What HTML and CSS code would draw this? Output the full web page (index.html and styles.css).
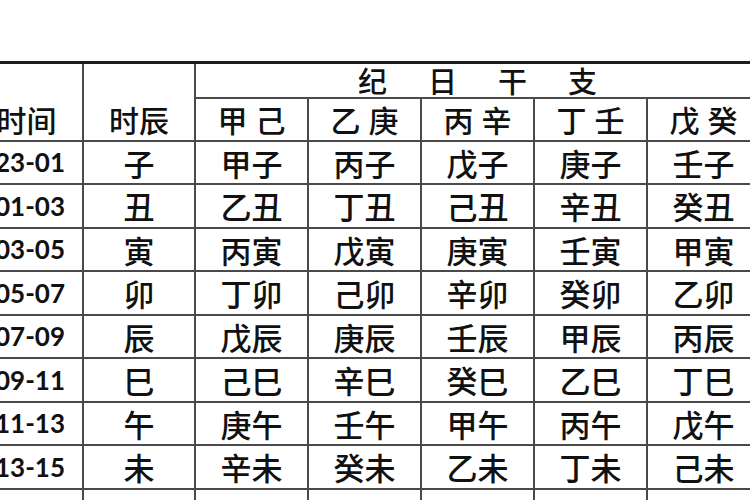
FILE: index.html
```html
<!DOCTYPE html>
<html lang="zh-CN">
<head>
<meta charset="utf-8">
<title>纪日干支</title>
<link rel="stylesheet" href="styles.css">
</head>
<body>
<div class="sheet">
  <table class="ganzhi">
    <colgroup>
      <col class="c-time">
      <col class="c-shichen">
      <col class="c-day">
      <col class="c-day">
      <col class="c-day">
      <col class="c-day">
      <col class="c-day">
    </colgroup>
    <thead>
      <tr class="h1">
        <th rowspan="2" class="th-side">时间</th>
        <th rowspan="2" class="th-side">时辰</th>
        <th colspan="5" class="th-span">纪日干支</th>
      </tr>
      <tr class="h2">
        <th class="th-sub">甲己</th>
        <th class="th-sub">乙庚</th>
        <th class="th-sub">丙辛</th>
        <th class="th-sub">丁壬</th>
        <th class="th-sub">戊癸</th>
      </tr>
    </thead>
    <tbody>
      <tr><td class="num">23-01</td><td>子</td><td>甲子</td><td>丙子</td><td>戊子</td><td>庚子</td><td>壬子</td></tr>
      <tr><td class="num">01-03</td><td>丑</td><td>乙丑</td><td>丁丑</td><td>己丑</td><td>辛丑</td><td>癸丑</td></tr>
      <tr><td class="num">03-05</td><td>寅</td><td>丙寅</td><td>戊寅</td><td>庚寅</td><td>壬寅</td><td>甲寅</td></tr>
      <tr><td class="num">05-07</td><td>卯</td><td>丁卯</td><td>己卯</td><td>辛卯</td><td>癸卯</td><td>乙卯</td></tr>
      <tr><td class="num">07-09</td><td>辰</td><td>戊辰</td><td>庚辰</td><td>壬辰</td><td>甲辰</td><td>丙辰</td></tr>
      <tr><td class="num">09-11</td><td>巳</td><td>己巳</td><td>辛巳</td><td>癸巳</td><td>乙巳</td><td>丁巳</td></tr>
      <tr><td class="num">11-13</td><td>午</td><td>庚午</td><td>壬午</td><td>甲午</td><td>丙午</td><td>戊午</td></tr>
      <tr><td class="num">13-15</td><td>未</td><td>辛未</td><td>癸未</td><td>乙未</td><td>丁未</td><td>己未</td></tr>
      <tr class="cut"><td class="num">15-17</td><td>申</td><td>壬申</td><td>甲申</td><td>丙申</td><td>戊申</td><td>庚申</td></tr>
    </tbody>
  </table>
</div>
</body>
</html>
```
FILE: styles.css
```css
html, body {
  margin: 0;
  padding: 0;
  background: #ffffff;
}

.sheet {
  width: 750px;
  height: 500px;
  overflow: hidden;
  padding-top: 61px;
  box-sizing: border-box;
  background: #ffffff;
}

.ganzhi {
  margin-left: -31px;
  border-collapse: collapse;
  table-layout: fixed;
  width: 790px;
  color: #111111;
  font-family: "Noto Sans CJK SC", "Noto Sans", sans-serif;
}

.c-time { width: 113px; }
.c-shichen { width: 112px; }
.c-day { width: 113px; }

.ganzhi th,
.ganzhi td {
  border: 2px solid #4a4a4a;
  padding: 0;
  text-align: center;
  vertical-align: middle;
  font-weight: 500;
  white-space: nowrap;
  overflow: hidden;
  box-sizing: border-box;
}

.ganzhi .h1 th {
  border-top: 3px solid #1c1c1c;
}

.h1 { height: 35px; }
.h2 { height: 43px; }
.ganzhi tbody tr { height: 43.5px; }

.ganzhi .th-side {
  font-size: 30px;
  line-height: 1;
  vertical-align: bottom;
  padding-bottom: 6px;
}

.ganzhi .th-span {
  font-size: 29px;
  line-height: 1;
  letter-spacing: 41px;
  padding-left: 41px;
  border-bottom: 1.5px solid #5a5a5a;
}

.ganzhi .th-sub {
  font-size: 30px;
  line-height: 1;
  letter-spacing: 8px;
  padding-left: 8px;
}

.ganzhi td {
  font-size: 31px;
  line-height: 1;
}

.ganzhi td.num {
  font-family: "Lato", "Open Sans", sans-serif;
  font-weight: 700;
  font-size: 26px;
  text-align: right;
  padding-right: 17px;
}

.ganzhi .cut td {
  vertical-align: bottom;
}
```
